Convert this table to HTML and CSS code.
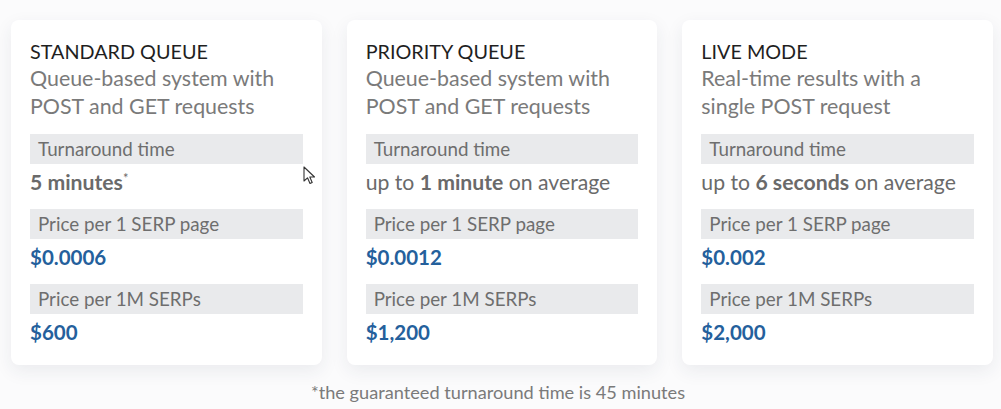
FILE: index.html
```html
<!DOCTYPE html>
<html>
<head>
<meta charset="utf-8">
<link rel="stylesheet" href="styles.css">
</head>
<body>
<div class="page">
  <div class="cards">
    <div class="card">
      <div class="title">STANDARD QUEUE</div>
      <div class="desc">Queue-based system with POST and GET requests</div>
      <div class="label">Turnaround time</div>
      <div class="value"><b>5 minutes</b><sup>*</sup></div>
      <div class="label">Price per 1 SERP page</div>
      <div class="price">$0.0006</div>
      <div class="label">Price per 1M SERPs</div>
      <div class="price">$600</div>
      <svg class="cursor" width="14" height="20" viewBox="0 0 14 20"><path d="M1 1 L1 15 L4.5 11.8 L7 17.5 L9.2 16.5 L6.8 11 L11.5 11 Z" fill="#fff" stroke="#333" stroke-width="1.1" stroke-linejoin="round"/></svg>
    </div>
    <div class="card">
      <div class="title">PRIORITY QUEUE</div>
      <div class="desc">Queue-based system with POST and GET requests</div>
      <div class="label">Turnaround time</div>
      <div class="value">up to <b>1 minute</b> on average</div>
      <div class="label">Price per 1 SERP page</div>
      <div class="price">$0.0012</div>
      <div class="label">Price per 1M SERPs</div>
      <div class="price">$1,200</div>
    </div>
    <div class="card">
      <div class="title">LIVE MODE</div>
      <div class="desc">Real-time results with a single POST request</div>
      <div class="label">Turnaround time</div>
      <div class="value">up to <b>6 seconds</b> on average</div>
      <div class="label">Price per 1 SERP page</div>
      <div class="price">$0.002</div>
      <div class="label">Price per 1M SERPs</div>
      <div class="price">$2,000</div>
    </div>
  </div>
  <div class="note">*the guaranteed turnaround time is 45 minutes</div>
</div>
</body>
</html>
```
FILE: styles.css
```css
* { box-sizing: border-box; }
html, body { margin: 0; padding: 0; background: #fbfbfc; }
body { font-family: "Lato", "Open Sans", sans-serif; }
.page { width: 1001px; height: 409px; padding: 20px 8px 0 11px; }
.cards { display: flex; gap: 25px; }
.card {
  position: relative;
  width: 311px;
  height: 345px;
  background: #fff;
  border-radius: 8px;
  box-shadow: 0 6px 18px rgba(40, 50, 80, 0.08);
  padding: 18px 19px 0 19px;
}
.title { font-size: 19.8px; color: #1f1f1f; line-height: 26px; }
.desc { font-size: 21.4px; color: #7a7a7a; line-height: 28px; margin-bottom: 14px; }
.label {
  background: #e9eaec;
  color: #6e6e6e;
  font-size: 18.8px;
  height: 30px;
  line-height: 30px;
  padding-left: 8px;
}
.value { font-size: 21.2px; color: #6a6a6a; line-height: 36px; margin-bottom: 9px; }
.value b { font-weight: 700; }
.value sup { font-size: 13px; vertical-align: 7px; line-height: 0; }
.price { font-size: 20.5px; font-weight: 700; color: #24609c; line-height: 36px; margin-bottom: 9px; }
.cursor { position: absolute; left: 292px; top: 146px; }
.note { text-align: center; font-size: 18.2px; color: #7a7a7a; margin-top: 16px; padding-right: 8px; }
```
